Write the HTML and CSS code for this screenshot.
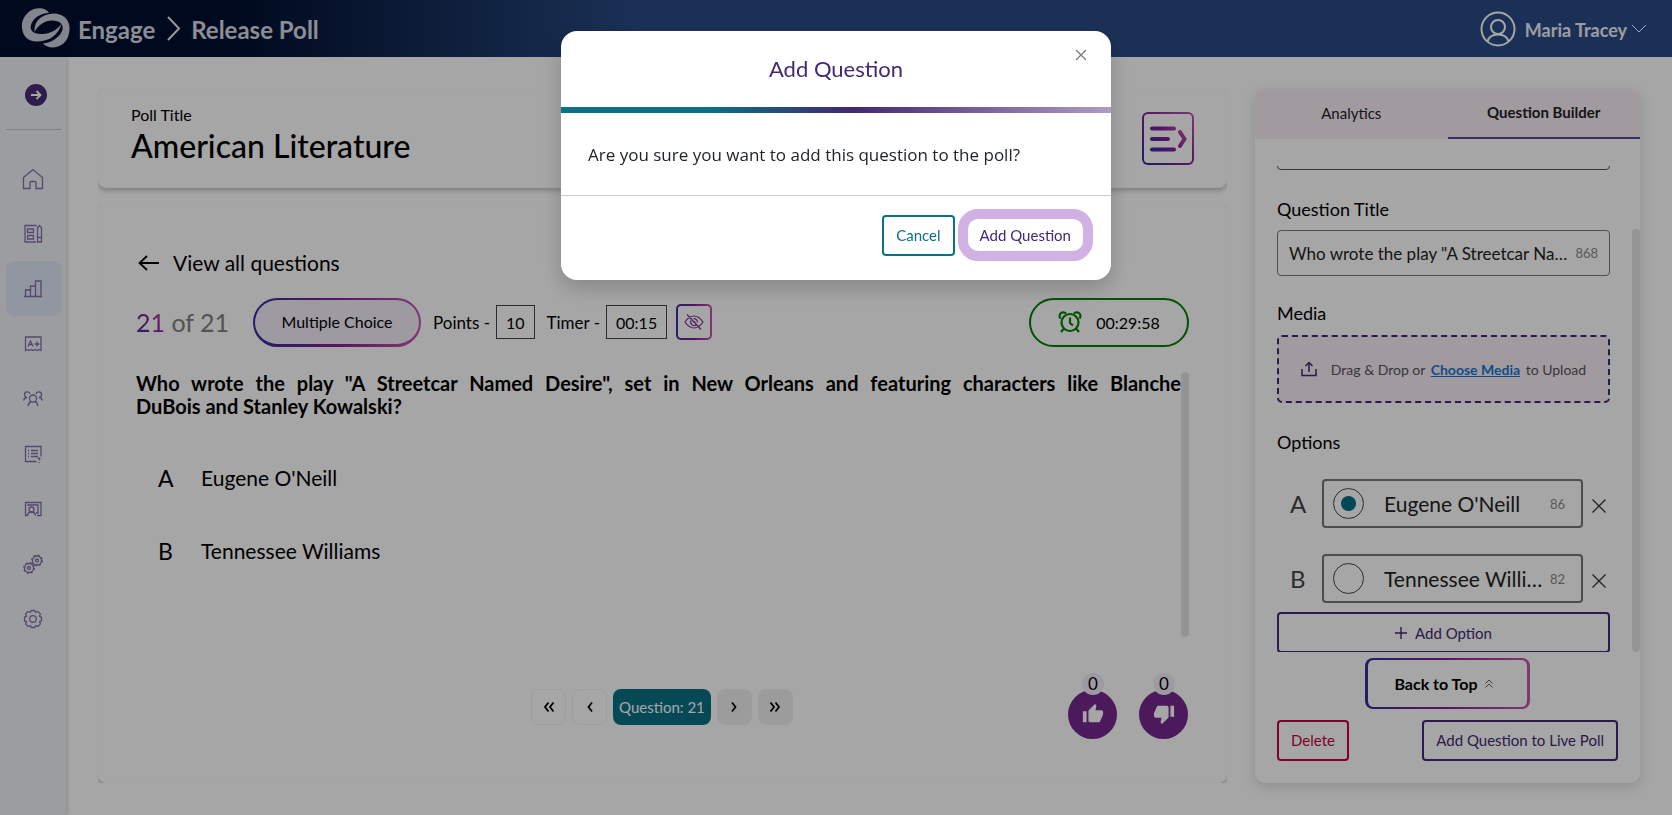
FILE: index.html
```html
<!DOCTYPE html>
<html lang="en">
<head>
<meta charset="utf-8">
<title>Engage - Release Poll</title>
<link rel="stylesheet" href="styles.css">
</head>
<body>
<svg class="defs" width="0" height="0" aria-hidden="true">
  <defs>
    <linearGradient id="brandLines" gradientUnits="userSpaceOnUse" x1="0" y1="26" x2="38" y2="0">
      <stop offset="0" stop-color="#2a2f9c"/><stop offset=".5" stop-color="#85209a"/><stop offset="1" stop-color="#c455ae"/>
    </linearGradient>
  </defs>
</svg>

<div class="app">
  <header class="topbar">
    <div class="crumbs">
      <svg class="logo" viewBox="0 0 52 44" width="52" height="44" aria-hidden="true">
        <path d="M29 7C27 3 20 1 14 3C6 6 1 14 2 22C3 32 10 36 18 35.500C30 35 38 29 41.500 18C37 24 29 28.500 21 28C13 28 9.500 24 11 19C13 12 20 7.500 29 7Z"/>
        <path d="M23 37.500C26 41 32 42.500 38 40.500C46 38 50 30 49.500 21C49 12 41 7 33 7.500C21 8.500 14 15 14.500 26C18 19 25 14.500 32 14.500C40 14.500 43.500 18 42.500 24C40 31 32 36.500 23 37.500Z"/>
      </svg>
      <a class="crumb" href="#">Engage</a>
      <svg class="crumb-sep" viewBox="0 0 14 25" width="14" height="25" aria-hidden="true"><path d="M1 1l11 11.500L1 24"/></svg>
      <a class="crumb" href="#">Release Poll</a>
    </div>
    <button class="user" type="button">
      <svg viewBox="0 0 36 36" width="36" height="36" aria-hidden="true"><circle cx="18" cy="18" r="16.500"/><circle cx="18" cy="16" r="7"/><path d="M7.500 30.500C9 25 13.500 23.500 18 23.500S27 25 28.500 30.500"/></svg>
      <span>Maria Tracey</span>
      <svg class="caret" viewBox="0 0 16 10" width="16" height="10" aria-hidden="true"><path d="M1 1l7 7 7-7"/></svg>
    </button>
  </header>

  <div class="body">
    <nav class="sidebar" aria-label="Main">
      <button class="expand" type="button" aria-label="Expand menu">
        <svg viewBox="0 0 22 22" width="22" height="22"><circle cx="11" cy="11" r="11" fill="#452b76"/><path d="M6 11h9M11.500 7l4 4-4 4" fill="none" stroke="#fff" stroke-width="1.800"/></svg>
      </button>
      <a class="nav" href="#" aria-label="Home"><svg viewBox="0 0 22 22"><path d="M1.500 9.500L11 1.500l9.500 8V20.500h-6.500v-6q0-1-1-1h-4q-1 0-1 1v6H1.500z"/></svg></a>
      <a class="nav" href="#" aria-label="Content"><svg viewBox="0 0 22 22"><path d="M14 3.500V2.500H3v16.500h11M5.500 6h6v3.500h-6zM5.500 12.500h6v3.500h-6zM15.500 5l2-2.500L19.500 5v14h-4zM15.500 14.500h4"/></svg></a>
      <a class="nav active" href="#" aria-label="Polls"><svg viewBox="0 0 22 22"><path d="M2 18.500h18M3.500 18.500v-6.500h5v6.500M8.500 18.500V8h5v10.500M13.500 18.500V3h5.500v15.500"/></svg></a>
      <a class="nav" href="#" aria-label="Grades"><svg viewBox="0 0 22 22"><path d="M3.500 4h15.500v13.500l-2-1-2 1-2-1-2 1-2-1-2 1-2-1-1.500 1zM6 13.500L8.500 8l2.500 5.500M7 11.700h3M12.500 11h5M15 8.500v5"/></svg></a>
      <a class="nav" href="#" aria-label="Groups"><svg viewBox="0 0 22 22"><circle cx="11" cy="10.500" r="3.500"/><path d="M6 18q1-4 3-4.500M16 18q-1-4-3-4.500M8 6a2.800 2.800 0 1 0-3 3.500Q2.500 9.500 1.500 12.500M14 6a2.800 2.800 0 1 1 3 3.500q2.500 0 3.500 3"/></svg></a>
      <a class="nav" href="#" aria-label="Quizzes"><svg viewBox="0 0 22 22"><path d="M14.500 18.500H3.500v-15h15.500v10M6 7.500h1M9 7.500h7M6 10.500h1M9 10.500h7M6 13.500h1M9 13.500h7M16 16q.5-1.500 1.500-1t-.5 2M17 19v1"/></svg></a>
      <a class="nav" href="#" aria-label="Classes"><svg viewBox="0 0 22 22"><path d="M6 17.500H3.500V4.500h15.500v13h-4M6 8V7h10v8h-2M5.500 17.500q.5-3.500 4-3.500t4 3.500"/><circle cx="9.500" cy="11.500" r="2.500"/></svg></a>
      <a class="nav" href="#" aria-label="Integrations"><svg viewBox="0 0 22 22"><circle cx="15" cy="7.500" r="4.500"/><circle cx="15" cy="7.500" r="1.500"/><circle cx="15" cy="7.500" r="5.300" stroke-dasharray="2 2.160"/><circle cx="7" cy="15" r="4.500"/><circle cx="7" cy="15" r="1.500"/><circle cx="7" cy="15" r="5.300" stroke-dasharray="2 2.160"/></svg></a>
      <a class="nav" href="#" aria-label="Settings"><svg viewBox="0 0 22 22"><circle cx="11" cy="11" r="3.300"/><path stroke-linejoin="round" d="M9.200 2.500H12.800L13.700 4.500 15.900 3.500 18.500 6.100 17.500 8.300 19.500 9.200V12.800L17.500 13.700 18.500 15.900 15.900 18.500 13.700 17.500 12.800 19.500H9.200L8.300 17.500 6.100 18.500 3.500 15.900 4.500 13.700 2.500 12.800V9.200L4.500 8.300 3.500 6.100 6.100 3.500 8.300 4.500Z"/></svg></a>
    </nav>

    <main class="content">
      <div class="left">
        <div class="card-clip first">
          <section class="card title-card">
            <div>
              <p class="eyebrow">Poll Title</p>
              <h1>American Literature</h1>
            </div>
            <button class="list-btn" type="button" aria-label="Show list">
              <svg viewBox="0 0 38 26" width="38" height="26"><path d="M3 2.500h22M3 13h16M3 23.500h22M31 6l4.500 7L31 20" fill="none" stroke="url(#brandLines)" stroke-width="4" stroke-linecap="round"/></svg>
            </button>
          </section>
        </div>

        <div class="card-clip grow">
        <section class="card poll">
          <a class="back" href="#">
            <svg viewBox="0 0 22 16" width="22" height="16" aria-hidden="true"><path d="M21 8H1.500M9 1L1.500 8 9 15"/></svg>
            View all questions
          </a>
          <div class="meta">
            <p class="count"><span class="cur">21</span> of 21</p>
            <span class="pill">Multiple Choice</span>
            <span class="field">Points - <b class="box">10</b></span>
            <span class="field">Timer - <b class="box">00:15</b></span>
            <button class="eye" type="button" aria-label="Hide answers">
              <svg viewBox="0 0 20 16" width="20" height="16"><path d="M1 8Q5 2 10 2t9 6q-4 6-9 6T1 8zM7 6.500A3.500 3.500 0 0 0 12 11M9.500 4.600A3.500 3.500 0 0 1 13.400 8.500M3 .5L17 15.500M9.500 7.500l2 1" fill="none" stroke="#7a2f92" stroke-width="1.200"/></svg>
            </button>
            <span class="clock">
              <svg viewBox="0 0 24 24" width="24" height="24" aria-hidden="true"><circle cx="12" cy="12.500" r="8.500"/><path d="M12 7.500V13l3 2.500M5.500 19L3 22M18.500 19l2.500 3M2.500 8.500A3.400 3.400 0 1 1 8 3.500M21.500 8.500A3.400 3.400 0 1 0 16 3.500"/></svg>
              00:29:58
            </span>
          </div>
          <div class="question">
            <div class="q-text">
              <p>Who wrote the play "A Streetcar Named Desire", set in New Orleans and featuring characters like Blanche DuBois&nbsp;and&nbsp;Stanley Kowalski?</p>
              <ol class="answers">
                <li><span class="letter">A</span>Eugene O'Neill</li>
                <li><span class="letter">B</span>Tennessee Williams</li>
              </ol>
            </div>
            <div class="track"></div>
          </div>
          <div class="foot">
            <div class="pager">
              <button type="button" aria-label="First"><svg viewBox="0 0 12 12"><path d="M5.500 1.500L2 6l3.500 4.500M10.500 1.500L7 6l3.500 4.500"/></svg></button>
              <button type="button" aria-label="Previous"><svg viewBox="0 0 12 12"><path d="M8 1.500L4.500 6 8 10.500"/></svg></button>
              <span class="page">Question: 21</span>
              <button class="on" type="button" aria-label="Next"><svg viewBox="0 0 12 12"><path d="M4 1.500L7.500 6 4 10.500"/></svg></button>
              <button class="on" type="button" aria-label="Last"><svg viewBox="0 0 12 12"><path d="M1.500 1.500L5 6l-3.500 4.500M6.500 1.500L10 6l-3.500 4.500"/></svg></button>
            </div>
            <div class="votes">
              <button class="vote" type="button" aria-label="Like"><span class="badge">0</span>
                <svg viewBox="0 0 24 24" width="22" height="22"><path d="M1 21h4V9H1v12zm22-11c0-1.100-.9-2-2-2h-6.310l.95-4.570.03-.32c0-.41-.17-.79-.44-1.060L14.170 1 7.590 7.590C7.220 7.950 7 8.450 7 9v10c0 1.100.9 2 2 2h9c.83 0 1.540-.5 1.840-1.220l3.020-7.050c.09-.23.14-.47.14-.73v-2z"/></svg></button>
              <button class="vote" type="button" aria-label="Dislike"><span class="badge">0</span>
                <svg viewBox="0 0 24 24" width="22" height="22"><path d="M15 3H6c-.83 0-1.540.5-1.840 1.220l-3.020 7.050c-.09.23-.14.47-.14.730v2c0 1.100.9 2 2 2h6.310l-.95 4.570-.03.32c0 .41.17.79.44 1.060L9.830 23l6.590-6.590c.36-.36.58-.86.58-1.410V5c0-1.100-.9-2-2-2zm4 0v12h4V3h-4z"/></svg></button>
            </div>
          </div>
        </section>
        </div>
      </div>

      <aside class="panel">
        <div class="tabs" role="tablist">
          <button type="button" role="tab" aria-selected="false">Analytics</button>
          <button type="button" role="tab" aria-selected="true" class="sel">Question Builder</button>
        </div>
        <div class="scroll">
          <form class="form">
            <input class="type" type="text" aria-label="Question type">
            <label for="qt">Question Title</label>
            <div class="input"><input id="qt" type="text" value="Who wrote the play &quot;A Streetcar Named Desire&quot;, set in New Orleans"><small>868</small></div>
            <h2>Media</h2>
            <div class="drop">
              <svg viewBox="0 0 16 16" width="16" height="16" aria-hidden="true"><path d="M1 8v6.500h14V8M8 11V1.500M4.500 5L8 1.500 11.500 5"/></svg>
              <span>Drag &amp; Drop or <a href="#">Choose Media</a> to Upload</span>
            </div>
            <h2>Options</h2>
            <div class="option">
              <label for="oa">A</label>
              <div class="opt-box"><input type="radio" name="correct" aria-label="A is correct" checked><input id="oa" type="text" value="Eugene O'Neill"><small>86</small></div>
              <button class="x" type="button" aria-label="Remove A"><svg viewBox="0 0 14 14" width="14" height="14"><path d="M.5.5l13 13M13.500.5l-13 13"/></svg></button>
            </div>
            <div class="option">
              <label for="ob">B</label>
              <div class="opt-box"><input type="radio" name="correct" aria-label="B is correct"><input id="ob" type="text" value="Tennessee Williams"><small>82</small></div>
              <button class="x" type="button" aria-label="Remove B"><svg viewBox="0 0 14 14" width="14" height="14"><path d="M.5.5l13 13M13.500.5l-13 13"/></svg></button>
            </div>
            <button class="add-option" type="button"><svg viewBox="0 0 12 12" width="12" height="12" aria-hidden="true"><path d="M6 0v12M0 6h12"/></svg>Add Option</button>
          </form>
          <div class="thumb"></div>
        </div>
        <div class="panel-foot">
          <button class="top" type="button">Back to Top <svg viewBox="0 0 8 9" width="8" height="9" aria-hidden="true"><path d="M.5 4.500L4 1l3.500 3.500M.5 8.500L4 5l3.500 3.500"/></svg></button>
          <div class="row">
            <button class="btn danger" type="button">Delete</button>
            <button class="btn" type="button">Add Question to Live Poll</button>
          </div>
        </div>
      </aside>
    </main>
  </div>
</div>

<div class="backdrop">
  <div class="modal" role="dialog" aria-modal="true" aria-labelledby="mt">
    <div class="modal-head">
      <h2 id="mt">Add Question</h2>
      <button class="close" type="button" aria-label="Close"><svg viewBox="0 0 12 12" width="12" height="12"><path d="M1 1l10 10M11 1L1 11"/></svg></button>
    </div>
    <p class="modal-body">Are you sure you want to add this question to the poll?</p>
    <div class="modal-foot">
      <button class="btn cancel" type="button">Cancel</button>
      <button class="confirm" type="button">Add Question</button>
    </div>
  </div>
</div>
</body>
</html>
```
FILE: styles.css
```css
:root {
  --purple: #432874;
  --teal: #0a7085;
  --brand: linear-gradient(90deg, #33309c, #8a1f9a 50%, #c855b0);
}
* { box-sizing: border-box; }
body { margin: 0; font-family: Lato, "Open Sans", sans-serif; font-size: 16px; color: #000; background: #fff; }
button, input { font: inherit; color: inherit; }
button { background: none; border: 0; padding: 0; display: inline-flex; align-items: center; justify-content: center; }
a { color: inherit; text-decoration: none; }
h1, h2, p, ol { margin: 0; padding: 0; font-weight: 400; }
svg { display: block; flex: none; }
.defs { position: absolute; }

.app { min-height: 100vh; display: flex; flex-direction: column; }
.topbar { height: 57px; display: flex; align-items: center; justify-content: space-between; padding: 0 25px 0 20px; color: #fff; background: linear-gradient(90deg, #000f2e 0, #000f2e 14%, #2a4b84 38%); }
.crumbs { display: flex; align-items: center; }
.logo { fill: #c9ced8; margin: 0 6px 2px 0; }
.crumb { font-size: 24px; line-height: 24px; padding-top: 2px; font-weight: 700; color: #d8dbe2; }
.crumb-sep { margin: 0 10px 0 12px; fill: none; stroke: #e8eaf0; stroke-width: 2; }
.user { font-size: 18px; font-weight: 700; color: #f0f2f6; }
.user svg { fill: none; stroke: #fff; stroke-width: 2; }
.user span { margin: 0 4px 0 9px; padding-top: 2px; }
.user .caret { stroke-width: 1; }

.body { flex: 1; display: flex; }
.sidebar { width: 66px; flex: none; background: #f0f2f8; box-shadow: 1px 0 4px rgba(0, 0, 0, .2); padding: 0 5px 0 6px; display: flex; flex-direction: column; }
.expand { height: 73px; margin-bottom: 21px; padding: 3px 0 0 5px; border-bottom: 1px solid #c4c6ce; }
.nav { height: 55px; display: flex; align-items: center; justify-content: center; padding-right: 1px; border-radius: 8px; }
.nav svg { width: 22px; height: 22px; fill: none; stroke: #846fa6; stroke-width: 1.300; }
.nav.active { background: #dfe7f8; }

.content { flex: 1; min-width: 0; display: flex; gap: 28px; padding: 32px; }
.left { flex: 1; min-width: 0; display: flex; flex-direction: column; }
.card-clip { overflow: hidden; }
.card-clip.first { padding-bottom: 16px; }
.card-clip.grow { flex: 1; display: flex; }
.card { background: #fff; border-radius: 8px; border: 1px solid #fcfcfc; box-shadow: 0 3px 5px rgba(0, 0, 0, .22); }
.title-card { height: 99px; display: flex; align-items: center; justify-content: space-between; padding: 0 32px; }
.eyebrow { font-size: 16px; line-height: 18px; }
h1 { font-size: 32px; line-height: 44px; font-weight: 500; padding-bottom: 3px; }
.list-btn { width: 52px; height: 53px; border: 2px solid transparent; border-radius: 6px; background: linear-gradient(#fff, #fff) padding-box, linear-gradient(45deg, #2a2f9c, #85209a 50%, #c455ae) border-box; }

.poll { flex: 1; min-width: 0; padding: 44px 37px 43px 37px; display: flex; flex-direction: column; }
.back { display: flex; align-items: center; gap: 13px; font-size: 21px; line-height: 28px; padding-left: 2px; }
.back svg { fill: none; stroke: #000; stroke-width: 1.800; }
.meta { display: flex; align-items: center; margin-top: 20px; height: 50px; }
.count { font-size: 25px; color: #808080; width: 117px; }
.cur { background: linear-gradient(45deg, #33309c, #8a1f9a 50%, #c855b0); -webkit-background-clip: text; background-clip: text; color: transparent; }
.pill { height: 49px; width: 168px; display: flex; align-items: center; justify-content: center; border: 2px solid transparent; border-bottom-width: 3px; border-radius: 25px; background: linear-gradient(#f3edf8, #f3edf8) padding-box, var(--brand) border-box; }
.field { display: flex; align-items: center; gap: 6px; margin-left: 12px; font-size: 17px; }
.box { height: 34px; padding: 0 9px; display: flex; align-items: center; border: 1px solid #444; font-size: 16px; font-weight: 400; }
.eye { width: 36px; height: 36px; margin-left: 9px; border: 2px solid transparent; border-radius: 5px; background: linear-gradient(#fff, #fff) padding-box, var(--brand) border-box; }
.clock { margin-left: auto; width: 160px; height: 49px; display: flex; align-items: center; justify-content: center; gap: 14px; border: 2px solid #008000; border-radius: 25px; }
.clock svg { fill: none; stroke: #008000; stroke-width: 2.200; }

.question { flex: 1; display: flex; margin-top: 25px; }
.q-text { flex: 1; min-width: 0; }
.q-text p { font-size: 20px; line-height: 23px; font-weight: 700; text-align: justify; }
.answers { list-style: none; padding: 23px 0 0 22px; font-size: 21px; }
.answers li { display: flex; align-items: center; height: 73px; }
.letter { width: 43px; font-size: 23px; }
.track, .thumb { width: 8px; border-radius: 4px; background: #e4e4e4; }

.foot { display: flex; align-items: center; justify-content: space-between; margin-top: 52px; height: 50px; }
.pager { display: flex; gap: 6px; margin: 0 0 14px 395px; }
.pager button { width: 35px; height: 36px; border-radius: 8px; border: 1px solid #f1f1f1; }
.pager .on { background: #f0f0f0; }
.pager svg { width: 12px; height: 12px; fill: none; stroke: #000; stroke-width: 1.800; }
.page { height: 36px; padding: 0 6px; display: flex; align-items: center; border-radius: 8px; background: var(--teal); color: #fff; font-size: 15px; }
.votes { display: flex; gap: 22px; padding-right: 1px; }
.vote { position: relative; width: 49px; height: 49px; border-radius: 50%; background: #75298e; }
.vote svg { fill: #fff; }
.badge { position: absolute; top: -17px; left: 14px; width: 22px; height: 22px; border-radius: 50%; background: #f3edf8; font-size: 17px; line-height: 22px; text-align: center; }

.panel { width: 385px; flex: none; display: flex; flex-direction: column; background: #fff; border-radius: 10px; box-shadow: 0 4px 14px rgba(0, 0, 0, .15); }
.tabs { display: flex; height: 50px; background: #f8edf5; border-radius: 10px 10px 0 0; }
.tabs button { flex: 1 1 0; color: #222; font-size: 15px; padding-bottom: 2px; }
.tabs .sel { font-weight: 700; border-bottom: 2px solid #5a459c; }
.scroll { position: relative; height: 486px; margin-top: 27px; overflow: hidden; }
.form { margin-top: -42px; padding: 0 30px 0 22px; }
.type { width: 100%; height: 46px; border: 1px solid #555; border-radius: 4px; display: block; margin-bottom: 26px; }
.form > label, .form h2 { display: block; font-size: 18px; line-height: 26px; }
.input { display: flex; align-items: center; gap: 4px; height: 46px; margin: 8px 0 24px; padding: 0 11px 0 11px; border: 1px solid #777; border-radius: 4px; font-size: 17px; }
.input input, .opt-box input[type=text] { flex: 1; width: 0; min-width: 0; border: 0; padding: 0; background: none; color: #222; text-overflow: ellipsis; }
small { font-size: 13px; color: #888; }
.drop { display: flex; align-items: center; justify-content: center; gap: 14px; height: 68px; margin: 9px 0 26px; border: 2px dashed var(--purple); border-radius: 5px; background: #f8edf5; font-size: 14px; color: #555; }
.drop a { margin: 0 2px; color: #1a76d2; font-weight: 700; text-decoration: underline; }
.drop svg { fill: none; stroke: var(--purple); stroke-width: 1.500; }
.option { display: flex; align-items: center; height: 49px; margin: 24px 0 26px; }
.option + .option { margin-bottom: 9px; }
.option label { width: 45px; padding-left: 13px; font-size: 24px; color: #444; }
.opt-box { flex: 1; min-width: 0; height: 49px; display: flex; align-items: center; border: 2px solid #777; border-radius: 4px; padding: 0 16px 0 9px; font-size: 21px; }
.opt-box input[type=radio] { appearance: none; flex: none; width: 31px; height: 31px; margin: 0 20px 0 0; border: 1px solid #444; border-radius: 50%; background: #fff; }
.opt-box input[type=radio]:checked { background: radial-gradient(circle, var(--teal) 7px, transparent 8px); }
.x { width: 27px; padding: 4px 0 0 5px; }
.x svg { fill: none; stroke: #333; stroke-width: 1.300; }
.add-option { width: 100%; height: 41px; gap: 8px; border: 2px solid var(--purple); border-radius: 4px; color: var(--purple); font-size: 15px; }
.add-option svg { stroke: var(--purple); stroke-width: 1.400; }
.thumb { position: absolute; right: 0; top: 63px; bottom: 0; }
.panel-foot { flex: 1; display: flex; flex-direction: column; align-items: center; padding: 6px 22px 0; }
.top { width: 165px; height: 51px; gap: 7px; padding-right: 8px; border: 2px solid transparent; border-width: 2px 3px; border-radius: 8px; background: linear-gradient(#fff, #fff) padding-box, var(--brand) border-box; font-weight: 700; }
.top svg { fill: none; stroke: #666; }
.row { align-self: stretch; display: flex; justify-content: space-between; margin-top: 11px; }
.btn { height: 41px; padding: 0 12px 1px; border: 2px solid var(--purple); border-radius: 4px; color: var(--purple); font-size: 15px; }
.danger { border-color: #c8003c; color: #c8003c; }

.backdrop { position: fixed; inset: 0; background: rgba(0, 0, 0, .35); display: flex; justify-content: center; align-items: flex-start; padding-top: 31px; }
.modal { width: 550px; max-width: 94%; background: #fff; border-radius: 16px; box-shadow: 0 8px 22px rgba(0, 0, 0, .2); }
.modal-head { position: relative; height: 82px; display: flex; align-items: center; justify-content: center; padding-bottom: 2px; border-bottom: 6px solid; border-image: linear-gradient(90deg, var(--teal) 27%, #432770 53%, #ad9dc6) 1; }
.modal-head h2 { font-size: 22px; color: var(--purple); }
.close { position: absolute; top: 18px; right: 24px; }
.close svg { fill: none; stroke: #777; stroke-width: 1.200; }
.modal-body { padding: 27px 27px 26px; font: 17px/29px "Open Sans", sans-serif; color: #212529; border-bottom: 1px solid #ccc; }
.modal-foot { display: flex; align-items: center; justify-content: flex-end; gap: 3px; padding: 13px 18px 19px; }
.cancel { border-color: var(--teal); color: var(--teal); }
.confirm { height: 52px; border: 10px solid #d1b0e4; border-radius: 20px; padding: 0 12px 1px; color: var(--purple); font-size: 15px; }
```
